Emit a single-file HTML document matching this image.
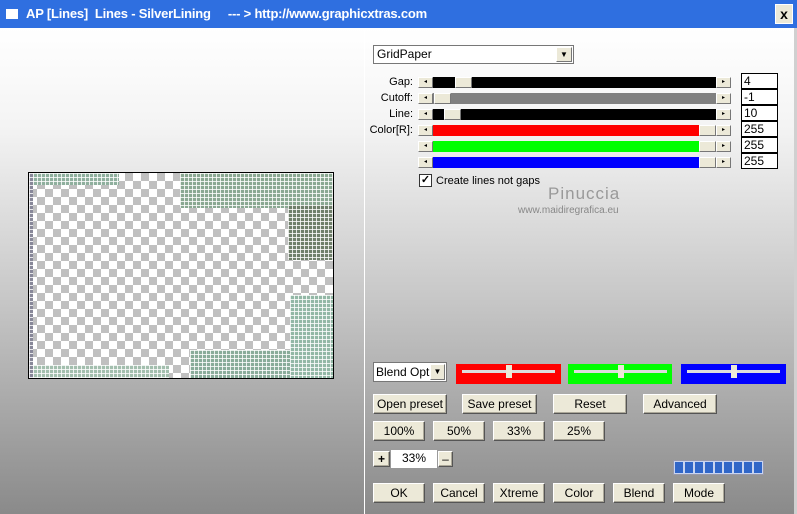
<!DOCTYPE html>
<html><head><meta charset="utf-8"><style>
*{box-sizing:border-box;margin:0;padding:0}
body{width:797px;height:514px;position:relative;overflow:hidden;font-family:"Liberation Sans",sans-serif;font-size:11px;background:#888}
.a{position:absolute}
.title{left:0;top:0;width:797px;height:28px;background:#2f6fe0;color:#fff;font-weight:bold;font-size:13px;line-height:28px;padding-left:26px;letter-spacing:-0.2px}
.panel{top:28px;height:486px;background:linear-gradient(#fff 0%,#f4f4f4 20%,#c8c8c8 55%,#8a8a8a 100%)}
.btn{position:absolute;background:#ece9d8;border:1px solid;border-color:#fff #555 #555 #fff;text-align:center;font-size:12px;color:#000;box-shadow:inset -1px -1px 0 #aca899}
.arr{position:absolute;width:15px;height:11px;background:#ece9d8;border:1px solid;border-color:#fff #777 #777 #fff;font-size:6px;text-align:center;line-height:9px}
.tb{position:absolute;background:#fff;border:1px solid #000;font-size:12px;line-height:14px;padding-left:2px;width:37px;height:16px}
.lbl{position:absolute;right:384px;font-size:11px;text-align:right}
.chk{background-color:#c0c0c0;background-image:linear-gradient(45deg,#fff 25%,transparent 25%,transparent 75%,#fff 75%),linear-gradient(45deg,#fff 25%,transparent 25%,transparent 75%,#fff 75%);background-size:16px 16px;background-position:0 0,8px 8px}
.grid{background-image:linear-gradient(90deg,rgba(255,255,255,.8) 1px,transparent 1px),linear-gradient(rgba(255,255,255,.8) 1px,transparent 1px);background-size:4px 4px}
</style></head><body>
<div class="a title">AP [Lines]&nbsp; Lines - SilverLining&nbsp;&nbsp;&nbsp;&nbsp; --- &gt; http://www.graphicxtras.com</div>
<div class="a" style="left:6px;top:9px;width:12px;height:10px;background:#fff"></div>
<div class="a" style="left:775px;top:4px;width:18px;height:20px;background:#ece9d8;border:1px solid #fff;font-weight:bold;font-size:14px;text-align:center;line-height:18px">x</div>
<div class="a panel" style="left:0;width:364px"></div>
<div class="a" style="left:364px;top:28px;width:1px;height:486px;background:#fff"></div>
<div class="a panel" style="left:365px;width:429px"></div>
<div class="a" style="left:794px;top:28px;width:3px;height:486px;background:#d0d0d0"></div>

<!-- preview -->
<div class="a chk" style="left:28px;top:172px;width:306px;height:207px;border:1px solid #000"></div>
<div class="a grid" style="left:29px;top:173px;width:90px;height:12px;background-color:#8fb09e"></div>
<div class="a grid" style="left:180px;top:173px;width:153px;height:35px;background-color:#8aa892"></div>
<div class="a grid" style="left:288px;top:205px;width:45px;height:55px;background-color:#6f7f6a"></div>
<div class="a grid" style="left:290px;top:295px;width:43px;height:83px;background-color:#93b8a6"></div>
<div class="a grid" style="left:190px;top:350px;width:100px;height:28px;background-color:#89ac9a"></div>
<div class="a grid" style="left:29px;top:365px;width:140px;height:13px;background-color:#a3bfae"></div>
<div class="a grid" style="left:29px;top:173px;width:4px;height:205px;background-color:#889"></div>

<!-- combo -->
<div class="a" style="left:373px;top:45px;width:201px;height:19px;background:#fff;border:1px solid #777;font-size:12px;line-height:17px;padding-left:3px">GridPaper</div>
<div class="arr" style="left:556px;top:47px;width:16px;height:15px;font-size:8px;line-height:13px">▼</div>

<!-- sliders -->
<div class="lbl" style="top:76px">Gap:</div>
<div class="lbl" style="top:92px">Cutoff:</div>
<div class="lbl" style="top:108px">Line:</div>
<div class="lbl" style="top:124px">Color[R]:</div>

<div class="arr" style="left:418px;top:77px">◂</div><div class="a" style="left:433px;top:77px;width:283px;height:11px;background:#000"></div><div class="arr" style="left:455px;top:77px;width:17px">&nbsp;</div><div class="arr" style="left:716px;top:77px">▸</div>
<div class="arr" style="left:418px;top:93px">◂</div><div class="a" style="left:433px;top:93px;width:283px;height:11px;background:#808080"></div><div class="arr" style="left:434px;top:93px;width:17px">&nbsp;</div><div class="arr" style="left:716px;top:93px">▸</div>
<div class="arr" style="left:418px;top:109px">◂</div><div class="a" style="left:433px;top:109px;width:283px;height:11px;background:#000"></div><div class="arr" style="left:444px;top:109px;width:17px">&nbsp;</div><div class="arr" style="left:716px;top:109px">▸</div>
<div class="arr" style="left:418px;top:125px">◂</div><div class="a" style="left:433px;top:125px;width:283px;height:11px;background:#f00"></div><div class="arr" style="left:699px;top:125px;width:17px">&nbsp;</div><div class="arr" style="left:716px;top:125px">▸</div>
<div class="arr" style="left:418px;top:141px">◂</div><div class="a" style="left:433px;top:141px;width:283px;height:11px;background:#0f0"></div><div class="arr" style="left:699px;top:141px;width:17px">&nbsp;</div><div class="arr" style="left:716px;top:141px">▸</div>
<div class="arr" style="left:418px;top:157px">◂</div><div class="a" style="left:433px;top:157px;width:283px;height:11px;background:#00f"></div><div class="arr" style="left:699px;top:157px;width:17px">&nbsp;</div><div class="arr" style="left:716px;top:157px">▸</div>

<div class="tb" style="left:741px;top:73px">4</div>
<div class="tb" style="left:741px;top:89px">-1</div>
<div class="tb" style="left:741px;top:105px">10</div>
<div class="tb" style="left:741px;top:121px">255</div>
<div class="tb" style="left:741px;top:137px">255</div>
<div class="tb" style="left:741px;top:153px">255</div>

<div class="a" style="left:419px;top:174px;width:13px;height:13px;background:#fff;border:1px solid #333;font-size:11px;line-height:11px;text-align:center;font-weight:bold">✓</div>
<div class="a" style="left:436px;top:175px;font-size:11px">Create lines not gaps</div>
<div class="a" style="left:548px;top:184px;font-size:17px;color:#999;letter-spacing:1px">Pinuccia</div>
<div class="a" style="left:518px;top:205px;font-size:10px;color:#888">www.maidiregrafica.eu</div>

<!-- bottom -->
<div class="a" style="left:373px;top:362px;width:74px;height:20px;background:#fff;border:1px solid #777;font-size:12px;line-height:18px;padding-left:2px;overflow:hidden">Blend Opti</div>
<div class="arr" style="left:430px;top:364px;width:15px;height:16px;font-size:8px;line-height:14px">▼</div>
<div class="a" style="left:456px;top:364px;width:105px;height:20px;background:#f00"></div>
<div class="a" style="left:568px;top:364px;width:104px;height:20px;background:#0f0"></div>
<div class="a" style="left:681px;top:364px;width:105px;height:20px;background:#00f"></div>
<div class="a" style="left:462px;top:370px;width:93px;height:3px;background:#ddd"></div>
<div class="a" style="left:574px;top:370px;width:93px;height:3px;background:#ddd"></div>
<div class="a" style="left:687px;top:370px;width:93px;height:3px;background:#ddd"></div>
<div class="a" style="left:506px;top:365px;width:6px;height:13px;background:#ece9d8"></div>
<div class="a" style="left:618px;top:365px;width:6px;height:13px;background:#ece9d8"></div>
<div class="a" style="left:731px;top:365px;width:6px;height:13px;background:#ece9d8"></div>

<div class="btn" style="left:373px;top:394px;width:74px;height:20px;line-height:18px">Open preset</div>
<div class="btn" style="left:462px;top:394px;width:75px;height:20px;line-height:18px">Save preset</div>
<div class="btn" style="left:553px;top:394px;width:74px;height:20px;line-height:18px">Reset</div>
<div class="btn" style="left:643px;top:394px;width:74px;height:20px;line-height:18px">Advanced</div>

<div class="btn" style="left:373px;top:421px;width:52px;height:20px;line-height:18px">100%</div>
<div class="btn" style="left:433px;top:421px;width:52px;height:20px;line-height:18px">50%</div>
<div class="btn" style="left:493px;top:421px;width:52px;height:20px;line-height:18px">33%</div>
<div class="btn" style="left:553px;top:421px;width:52px;height:20px;line-height:18px">25%</div>

<div class="btn" style="left:373px;top:451px;width:17px;height:16px;line-height:14px;font-weight:bold">+</div>
<div class="a" style="left:391px;top:450px;width:46px;height:18px;background:#fff;text-align:center;font-size:12px;line-height:16px">33%</div>
<div class="btn" style="left:438px;top:451px;width:15px;height:16px;line-height:14px">–</div>

<div class="a" style="left:673px;top:460px;width:91px;height:15px;background:#c8d4f0;border:1px solid #99a;padding:1px;display:flex;gap:2px">
<div style="flex:1;background:#3066c8"></div><div style="flex:1;background:#3066c8"></div><div style="flex:1;background:#3066c8"></div><div style="flex:1;background:#3066c8"></div><div style="flex:1;background:#3066c8"></div><div style="flex:1;background:#3066c8"></div><div style="flex:1;background:#3066c8"></div><div style="flex:1;background:#3066c8"></div><div style="flex:1;background:#3066c8"></div></div>

<div class="btn" style="left:373px;top:483px;width:52px;height:20px;line-height:18px">OK</div>
<div class="btn" style="left:433px;top:483px;width:52px;height:20px;line-height:18px">Cancel</div>
<div class="btn" style="left:493px;top:483px;width:52px;height:20px;line-height:18px">Xtreme</div>
<div class="btn" style="left:553px;top:483px;width:52px;height:20px;line-height:18px">Color</div>
<div class="btn" style="left:613px;top:483px;width:52px;height:20px;line-height:18px">Blend</div>
<div class="btn" style="left:673px;top:483px;width:52px;height:20px;line-height:18px">Mode</div>
</body></html>
